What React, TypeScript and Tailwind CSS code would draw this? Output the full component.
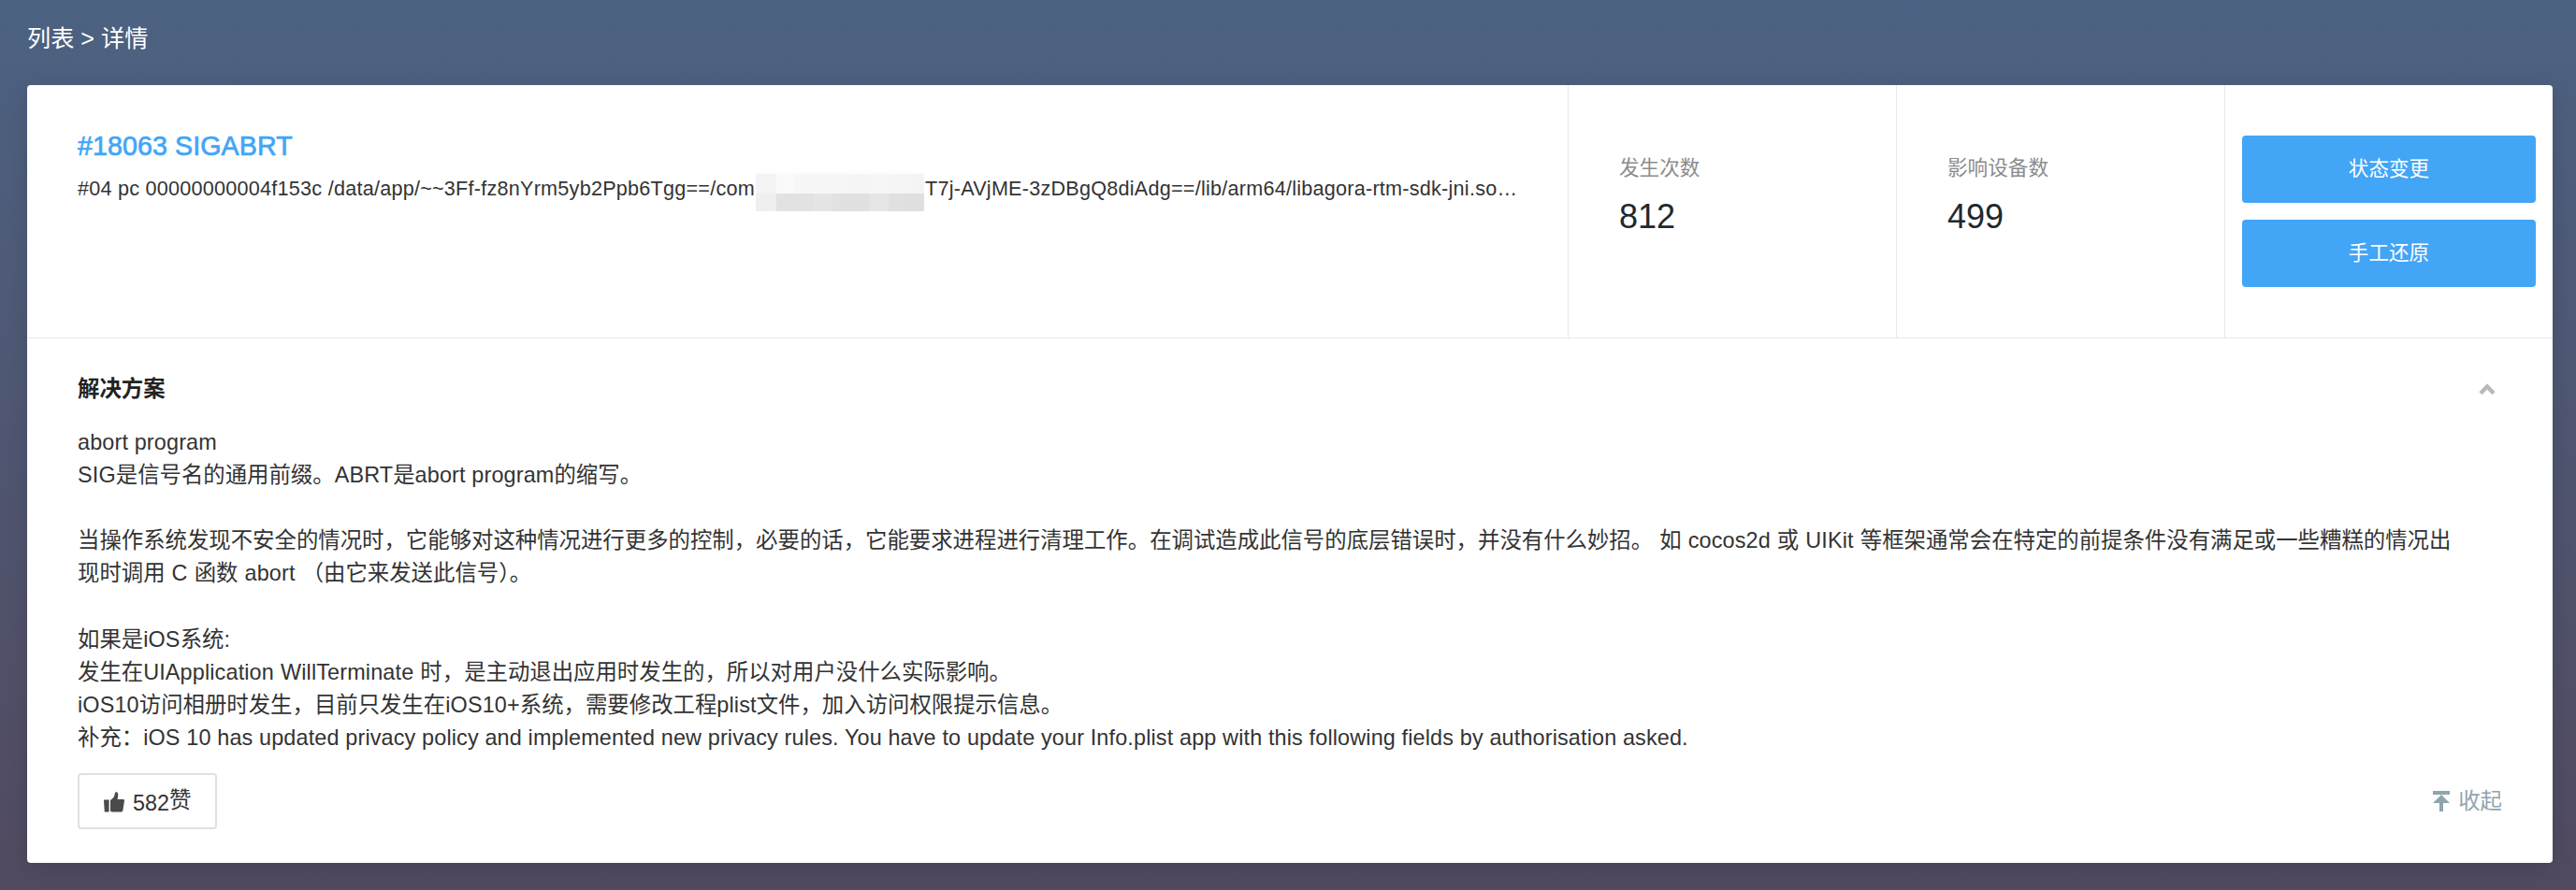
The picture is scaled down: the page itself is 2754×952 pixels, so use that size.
import React from "react";

const solution: string[] = [
  "abort program",
  "SIG是信号名的通用前缀。ABRT是abort program的缩写。",
  "",
  "当操作系统发现不安全的情况时，它能够对这种情况进行更多的控制，必要的话，它能要求进程进行清理工作。在调试造成此信号的底层错误时，并没有什么妙招。 如 cocos2d 或 UIKit 等框架通常会在特定的前提条件没有满足或一些糟糕的情况出",
  "现时调用 C 函数 abort （由它来发送此信号）。",
  "",
  "如果是iOS系统:",
  "发生在UIApplication WillTerminate 时，是主动退出应用时发生的，所以对用户没什么实际影响。",
  "iOS10访问相册时发生，目前只发生在iOS10+系统，需要修改工程plist文件，加入访问权限提示信息。",
  "补充：iOS 10 has updated privacy policy and implemented new privacy rules. You have to update your Info.plist app with this following fields by authorisation asked.",
];

/* Latin words get slight tracking, and a lone space beside CJK text is a little wider. */
function MixedText({ text }: { text: string }) {
  const runs = text.split(/([\x20-\x7e]+)/).filter(Boolean);
  return (
    <>
      {runs.map((run, i) => {
        if (!/^[\x20-\x7e]/.test(run)) return <span key={i}>{run}</span>;
        const spaced = runs.length > 1 && /^ | $/.test(run);
        return (
          <span key={i} className={spaced ? "tracking-[0.15px] [word-spacing:0.4px]" : "tracking-[0.15px]"}>
            {run}
          </span>
        );
      })}
    </>
  );
}

function Redacted() {
  return (
    <span className="-mt-[1px] mr-[1px] ml-[1px] grid h-[43px] w-[180px] shrink-0 grid-cols-[22px_20px_20px_20px_20px_20px_20px_20px_18px] grid-rows-[3px_21px_19px]">
      <span className="col-span-9 bg-[#fdfdfd]" />
      <span className="bg-[#f3f3f3]" />
      <span className="bg-[#fafafa]" />
      <span className="bg-[#f7f7f7]" />
      <span className="bg-[#f7f7f7]" />
      <span className="bg-[#f6f6f6]" />
      <span className="bg-[#f5f5f5]" />
      <span className="bg-[#f6f6f6]" />
      <span className="bg-[#f5f5f5]" />
      <span className="bg-[#f4f4f4]" />
      <span className="bg-[#efefef]" />
      <span className="bg-[#e2e2e2]" />
      <span className="bg-[#e2e2e2]" />
      <span className="bg-[#e5e5e5]" />
      <span className="bg-[#e1e1e1]" />
      <span className="bg-[#e1e1e1]" />
      <span className="bg-[#e6e6e6]" />
      <span className="bg-[#e0e0e0]" />
      <span className="bg-[#dfdfdf]" />
    </span>
  );
}

function Stat({ label, value }: { label: string; value: string }) {
  return (
    <div className="w-[351px] shrink-0 border-l border-[#e8e8e8] pt-[74px] pl-[54px]">
      <div className="text-[21.6px] leading-[30px] text-[#8c8c8c]">{label}</div>
      <div className="mt-[16px] text-[36px] leading-[42px] text-[#20292f]">{value}</div>
    </div>
  );
}

function ActionButton({ children }: { children: React.ReactNode }) {
  return (
    <button className="h-[72px] w-full rounded-[4px] bg-[#42a5f6] text-[21.6px] leading-[72px] text-white">
      {children}
    </button>
  );
}

export default function App() {
  return (
    <div className="h-[952px] w-[2754px] overflow-hidden bg-linear-to-b from-[#4c6282] to-[#514a60] pr-[25px] pl-[29px] font-['Liberation_Sans','Noto_Sans_CJK_SC',sans-serif] text-[#333]">
      <div className="h-[91px] pt-[23px] text-[25.2px] leading-[36px] text-white">列表 &gt; 详情</div>

      <div className="h-[832px] rounded-[4px] bg-white shadow-[0_6px_24px_rgba(0,0,0,0.13)]">
        <div className="flex h-[271px] border-b border-[#e8e8e8]">
          <div className="min-w-0 flex-1 pt-[47px] pl-[54px]">
            <div className="text-[28.6px] leading-[36px] tracking-[0.1px] text-[#42a5f6] [-webkit-text-stroke:0.7px_#42a5f6]">
              #18063 SIGABRT
            </div>
            <div className="mt-[10px] flex h-[43px] text-[21.6px] leading-[36px] tracking-[0.245px] whitespace-nowrap">
              <span>#04 pc 00000000004f153c /data/app/~~3Ff-fz8nYrm5yb2Ppb6Tgg==/com</span>
              <Redacted />
              <span>T7j-AVjME-3zDBgQ8diAdg==/lib/arm64/libagora-rtm-sdk-jni.so…</span>
            </div>
          </div>
          <Stat label="发生次数" value="812" />
          <Stat label="影响设备数" value="499" />
          <div className="flex w-[351px] shrink-0 flex-col gap-[18px] border-l border-[#e8e8e8] pt-[54px] pr-[18px] pl-[18px]">
            <ActionButton>状态变更</ActionButton>
            <ActionButton>手工还原</ActionButton>
          </div>
        </div>

        <div className="pt-[37px] pr-[54px] pl-[54px] text-[23.4px] leading-[35.1px]">
          <div className="flex h-[35px] items-center justify-between">
            <div className="font-bold text-[#222]">解决方案</div>
            <svg className="mr-[7px] h-[14px] w-[18px]" viewBox="0 0 18 14" fill="none">
              <path d="M2 10.800 9 3.400l7 7.400" stroke="#b9b9b9" strokeWidth="4.400" />
            </svg>
          </div>

          <div className="mt-[22px] h-[351px] whitespace-pre">
            {solution.map((line, i) => (
              <div key={i} className="h-[35.1px]">
                <MixedText text={line} />
              </div>
            ))}
          </div>

          <div className="mt-[20px] flex h-[60px] items-center justify-between">
            <button className="flex h-[60px] w-[149px] rounded-[4px] border-2 border-[#e0e0e0] pt-[13px] pl-[26px]">
              <svg className="mt-[5px] mr-[9px] h-[22px] w-[22px]" viewBox="0 0 22 22" fill="#4a4a4a">
                <path d="M0 8.500h5.600V21.500H.8Z" />
                <path d="M7 20.500V9c2.800-1.800 4.500-4 4.800-7.200C12 .3 13.300 0 14.200.6c1.500 1 1.300 3.800.3 7.400h6.300c.9 0 1.300.6 1.200 1.400l-1.600 10.400c-.2 1.100-.8 1.700-1.900 1.700H8.500Z" />
              </svg>
              <span>582</span>
              <span className="relative -top-[3px]">赞</span>
            </button>
            <div className="flex items-center text-[#90a4ae]">
              <svg className="mr-[9px] h-[22px] w-[18px]" viewBox="0 0 18 22" fill="#90a4ae">
                <path d="M0 0h18v4H0ZM9 4l9 9h-7v9H7v-9H0Z" />
              </svg>
              <span className="pt-[2px]">收起</span>
            </div>
          </div>
        </div>
      </div>
    </div>
  );
}
